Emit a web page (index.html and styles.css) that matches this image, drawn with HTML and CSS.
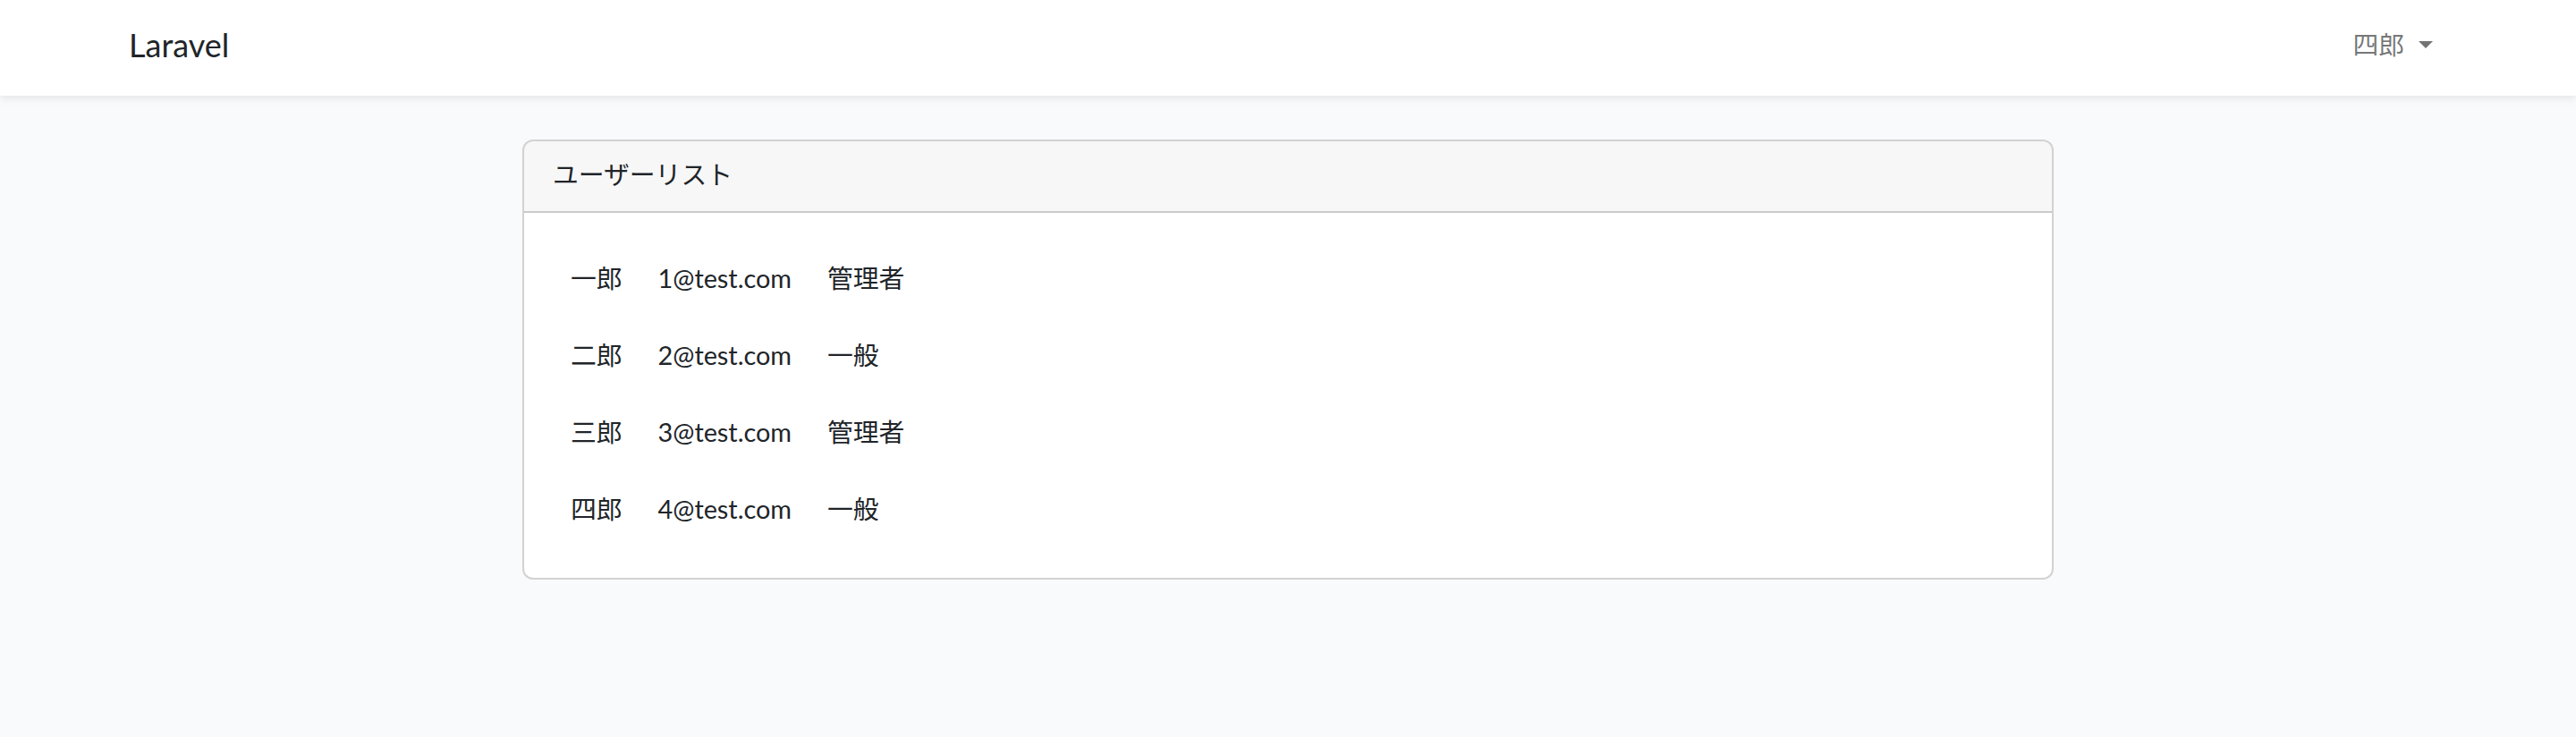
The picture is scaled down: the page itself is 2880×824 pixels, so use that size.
FILE: index.html
```html
<!DOCTYPE html>
<html lang="ja">
<head>
<meta charset="utf-8">
<title>Laravel</title>
<link rel="stylesheet" href="styles.css">
</head>
<body>
<div class="app">
  <nav class="navbar">
    <div class="container nav-inner">
      <a class="brand" href="#">Laravel</a>
      <ul class="nav-right">
        <li><a class="nav-link dropdown-toggle" href="#">四郎</a></li>
      </ul>
    </div>
  </nav>
  <main class="main">
    <div class="container">
      <div class="row">
        <div class="col">
          <div class="card">
            <div class="card-header">ユーザーリスト</div>
            <div class="card-body">
              <table class="users">
                <tbody>
                  <tr><td>一郎</td><td>1@test.com</td><td>管理者</td></tr>
                  <tr><td>二郎</td><td>2@test.com</td><td>一般</td></tr>
                  <tr><td>三郎</td><td>3@test.com</td><td>管理者</td></tr>
                  <tr><td>四郎</td><td>4@test.com</td><td>一般</td></tr>
                </tbody>
              </table>
            </div>
          </div>
        </div>
      </div>
    </div>
  </main>
</div>
</body>
</html>
```

FILE: styles.css
```css
* { box-sizing: border-box; }

html, body {
  margin: 0;
  padding: 0;
}

body {
  background: #f8fafc;
  color: #212529;
  font-family: "Lato", "Noto Sans CJK JP", sans-serif;
  font-size: 28.8px;
  line-height: 1.6;
  min-height: 824px;
}

a { text-decoration: none; color: inherit; }

.container {
  width: 2640px;
  margin: 0 auto;
  padding: 0 24px;
}

.navbar {
  background: #fff;
  box-shadow: 0 4px 8px rgba(0, 0, 0, 0.075);
  padding: 15px 0;
}

.nav-inner {
  display: flex;
  align-items: center;
  justify-content: space-between;
  height: 77px;
  padding-bottom: 6px;
}

.brand {
  font-size: 36px;
  color: #212529;
  line-height: 1.6;
}

.nav-right {
  list-style: none;
  margin: 0;
  padding: 0;
  display: flex;
}

.nav-link {
  display: block;
  padding: 16px 16px;
  color: rgba(0, 0, 0, 0.55);
}

.dropdown-toggle::after {
  content: "";
  display: inline-block;
  margin-left: 0.55em;
  vertical-align: 0.255em;
  border-top: 0.3em solid;
  border-right: 0.3em solid transparent;
  border-left: 0.3em solid transparent;
  border-bottom: 0;
}

.main {
  padding: 49px 0 48px;
}

.row {
  display: flex;
  justify-content: center;
  margin: 0 -24px;
}

.col {
  width: 1760px;
  padding: 0 24px;
}

.card {
  background: #fff;
  border: 2px solid rgba(0, 0, 0, 0.175);
  border-radius: 12px;
  overflow: hidden;
}

.card-header {
  background: rgba(0, 0, 0, 0.03);
  border-bottom: 2px solid rgba(0, 0, 0, 0.175);
  padding: 14px 32px 18px;
  height: 80px;
}

.card-body {
  padding: 32px;
}

.users {
  border-collapse: collapse;
}

.users td {
  padding: 18px 20px 22px;
  line-height: 1.6;
  white-space: nowrap;
}
```
